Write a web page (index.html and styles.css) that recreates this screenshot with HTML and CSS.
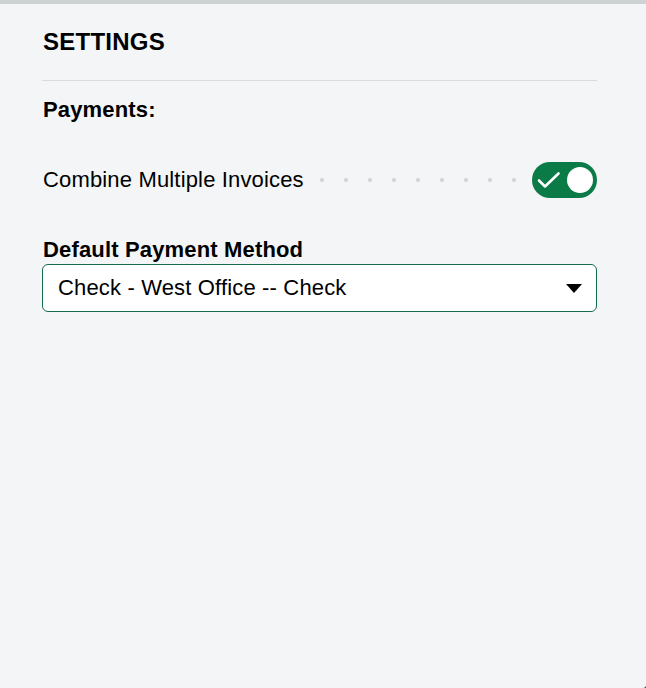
FILE: index.html
```html
<!DOCTYPE html>
<html lang="en">
<head>
<meta charset="utf-8">
<title>Settings</title>
<link rel="stylesheet" href="styles.css">
</head>
<body>
<div class="frame">
  <div class="topbar"></div>
  <main class="panel">
    <h1 class="title">SETTINGS</h1>
    <section class="section">
      <h2 class="section-title">Payments:</h2>
      <div class="setting-row">
        <span class="setting-label">Combine Multiple Invoices</span>
        <span class="leader"></span>
        <span class="toggle is-on" role="switch" aria-checked="true">
          <svg class="toggle-check" width="24" height="18" viewBox="0 0 24 18" aria-hidden="true">
            <path d="M2 9.5 L8 15.5 L21.5 2.5" fill="none" stroke="#ffffff" stroke-width="2.6" stroke-linecap="round" stroke-linejoin="round"/>
          </svg>
          <span class="toggle-knob"></span>
        </span>
      </div>
      <label class="field-label">Default Payment Method</label>
      <div class="select">
        <span class="select-value">Check - West Office -- Check</span>
        <svg class="select-arrow" width="16" height="9" viewBox="0 0 16 9" aria-hidden="true">
          <path d="M0 0 H16 L8 9 Z" fill="#000000"/>
        </svg>
      </div>
    </section>
  </main>
</div>
</body>
</html>
```

FILE: styles.css
```css
html, body {
  margin: 0;
  padding: 0;
  background: #3a3d40;
}

body {
  font-family: "Liberation Sans", Arial, Helvetica, sans-serif;
  color: #000000;
}

.frame {
  width: 646px;
  height: 688px;
  background: #f3f5f6;
  border-bottom-right-radius: 3px;
  display: flex;
  flex-direction: column;
}

.topbar {
  height: 4px;
  background: #ccd3d2;
  flex: none;
}

.panel {
  padding: 0 49px 0 42px;
}

.title {
  margin: 0;
  padding: 24px 0 24px 1px;
  font-size: 24px;
  line-height: 28px;
  font-weight: 700;
  letter-spacing: 0.25px;
  border-bottom: 1px solid #d6dbdd;
}

.section {
  display: flex;
  flex-direction: column;
}

.section-title {
  margin: 16px 0 0 0;
  padding-left: 1px;
  font-size: 22px;
  line-height: 26px;
  font-weight: 700;
  letter-spacing: 0.15px;
}

.setting-row {
  margin-top: 39px;
  height: 36px;
  display: flex;
  align-items: center;
}

.setting-label {
  font-size: 22px;
  line-height: 26px;
  letter-spacing: 0.16px;
  padding-left: 1px;
  white-space: nowrap;
}

.leader {
  flex: 1;
  height: 6px;
  margin: 0 6px;
  background-image: radial-gradient(circle, #d0d5d9 1.7px, rgba(208, 213, 217, 0) 2.3px);
  background-size: 24px 6px;
  background-repeat: round no-repeat;
  background-position: 0 50%;
}

.toggle {
  flex: none;
  width: 65px;
  height: 36px;
  border-radius: 18px;
  background: #0a7a46;
  display: flex;
  align-items: center;
  justify-content: space-between;
  padding: 0 4px 0 5px;
  box-sizing: border-box;
}

.toggle-check {
  display: block;
}

.toggle-knob {
  width: 26px;
  height: 26px;
  border-radius: 50%;
  background: #ffffff;
}

.field-label {
  display: block;
  margin-top: 39px;
  padding-left: 1px;
  font-size: 22px;
  line-height: 26px;
  font-weight: 700;
  letter-spacing: 0.16px;
}

.select {
  margin-top: 1px;
  height: 48px;
  box-sizing: border-box;
  background: #ffffff;
  border: 1px solid #146b4c;
  border-radius: 6px;
  padding: 0 14px 0 15px;
  display: flex;
  align-items: center;
  justify-content: space-between;
}

.select-value {
  font-size: 22px;
  line-height: 26px;
  letter-spacing: 0.16px;
}

.select-arrow {
  display: block;
}
```
